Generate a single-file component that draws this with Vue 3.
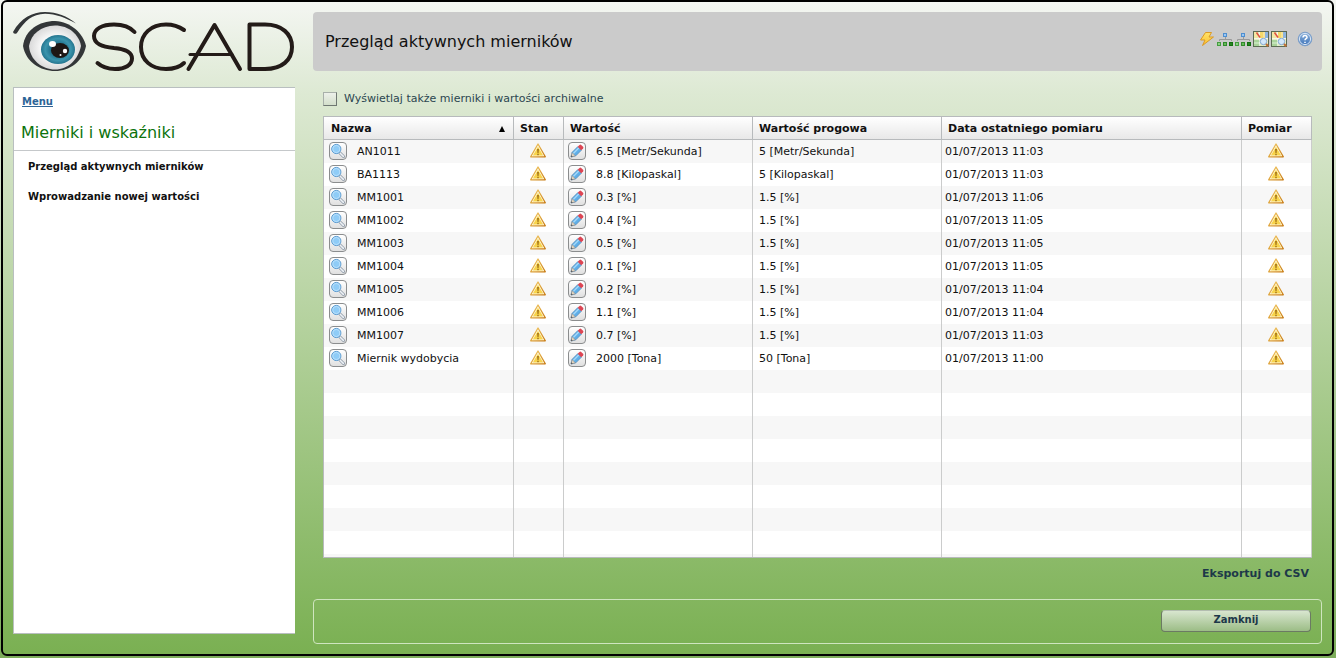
<script setup>
import { ref } from 'vue'

const archived = ref(false)
const rows = [
  ['AN1011', '6.5 [Metr/Sekunda]', '5 [Metr/Sekunda]', '01/07/2013 11:03'],
  ['BA1113', '8.8 [Kilopaskal]', '5 [Kilopaskal]', '01/07/2013 11:03'],
  ['MM1001', '0.3 [%]', '1.5 [%]', '01/07/2013 11:06'],
  ['MM1002', '0.4 [%]', '1.5 [%]', '01/07/2013 11:05'],
  ['MM1003', '0.5 [%]', '1.5 [%]', '01/07/2013 11:05'],
  ['MM1004', '0.1 [%]', '1.5 [%]', '01/07/2013 11:05'],
  ['MM1005', '0.2 [%]', '1.5 [%]', '01/07/2013 11:04'],
  ['MM1006', '1.1 [%]', '1.5 [%]', '01/07/2013 11:04'],
  ['MM1007', '0.7 [%]', '1.5 [%]', '01/07/2013 11:03'],
  ['Miernik wydobycia', '2000 [Tona]', '50 [Tona]', '01/07/2013 11:00'],
]
</script>

<template>
  <div class="frame">
    <svg class="defs" aria-hidden="true">
      <defs>
        <linearGradient id="warnFill" x1="0" y1="0" x2="1" y2="1">
          <stop offset="0" stop-color="#f6cf6a" />
          <stop offset="1" stop-color="#c87a10" />
        </linearGradient>
        <linearGradient id="boltFill" x1="0" y1="0" x2="0" y2="1">
          <stop offset="0" stop-color="#ffe36b" />
          <stop offset="1" stop-color="#f9c030" />
        </linearGradient>
        <linearGradient id="helpFill" x1="0" y1="0" x2="0" y2="1">
          <stop offset="0" stop-color="#8fb4dd" />
          <stop offset="1" stop-color="#3c72b8" />
        </linearGradient>
        <radialGradient id="irisFill">
          <stop offset="0.4" stop-color="#1f6f8a" />
          <stop offset="0.75" stop-color="#3b94ad" />
          <stop offset="1" stop-color="#25758f" />
        </radialGradient>
        <radialGradient id="whiteFill">
          <stop offset="0.5" stop-color="#fafafa" />
          <stop offset="1" stop-color="#d9d9d9" />
        </radialGradient>
        <symbol id="warn" viewBox="0 0 16 15">
          <path d="M8 1 15.3 13.8H.7Z" fill="#fffbe8" stroke="url(#warnFill)" stroke-width="1.3" stroke-linejoin="round" />
          <path d="M8 3.8 13.2 12.6H2.8Z" fill="#f8d44c" />
          <path d="M7 6h2l-.4 4H7.4Z" fill="#a8781c" />
          <rect x="7.2" y="10.7" width="1.6" height="1.5" fill="#a8781c" />
        </symbol>
        <symbol id="lens" viewBox="0 0 16 16">
          <path d="m10 10 3.500 3.500" stroke="#8b97a5" stroke-width="3" stroke-linecap="round" />
          <path d="m10.200 10.200 3.200 3.200" stroke="#eef2f6" stroke-width="1.600" stroke-linecap="round" />
          <circle cx="6.3" cy="6" r="4.6" fill="#8fccf7" stroke="#5b9bd0" />
          <circle cx="6.3" cy="6" r="3.600" fill="none" stroke="#c4e5fc" stroke-width=".8" />
        </symbol>
        <symbol id="pencil" viewBox="0 0 16 16">
          <path d="m2 14 1.2-4.800 5.500-5.500 3.600 3.600-5.500 5.500Z" fill="#5eaee8" stroke="#4b84b4" stroke-width=".7" />
          <path d="m4.3 10.500 5.700-5.700" stroke="#a5d8f8" stroke-width="1.4" />
          <path d="m2 14 1.2-4.300 3.1 3.1Z" fill="#e8d8c0" stroke="#8b8b8b" stroke-width=".6" />
          <path d="m8.700 3.700 1.800-1.800q.9-.7 1.700 0l1.900 1.900q.7.900 0 1.700l-1.800 1.800Z" fill="#dd4654" />
          <path d="m2 14 .5-1.7 1.2 1.2Z" fill="#444" />
        </symbol>
        <symbol id="tree" viewBox="0 0 18 16">
          <path d="M9.500 5v3M3.500 10V8.500h12V10" fill="none" stroke="#999" />
          <rect x="7.5" y="2.5" width="3" height="3" fill="#9bc7f2" stroke="#4f8fd0" />
          <rect x="1.5" y="11.5" width="3" height="3" fill="#8bd184" stroke="#459d40" />
          <rect x="7.5" y="11.5" width="3" height="3" fill="#64bb58" stroke="#338a2d" />
          <rect x="13.5" y="11.5" width="3" height="3" fill="#278422" stroke="#137010" />
        </symbol>
        <symbol id="map" viewBox="0 0 16 16">
          <rect x=".5" y=".5" width="15" height="15" fill="#e6edc6" stroke="#5c6b54" />
          <rect x="1" y="1" width="4" height="6" fill="#f3e7a4" />
          <rect x="7" y="1" width="5" height="6" fill="#f4d96a" />
          <rect x="12" y="1" width="3" height="6" fill="#8cb4df" />
          <rect x="1" y="9" width="6" height="6" fill="#a9d49a" />
          <path d="M1 7.500h14M6.500 1v14M11 1v7M1 12h6" stroke="#fff" stroke-width=".6" />
          <path d="m3.500 1.500 3.500 5" stroke="#df5140" stroke-width="1.5" />
          <circle cx="10.5" cy="10.5" r="3.200" fill="#d3e7fa" stroke="#83a9d4" />
          <path d="m13 13 2.300 2.300" stroke="#bd6d35" stroke-width="2" />
        </symbol>
      </defs>
    </svg>

    <aside class="side">
      <svg class="logo" viewBox="0 0 282 66" role="img" aria-label="OSCAD">
        <path d="M0 20C8 6 19 0 32 0c12 0 22 4 31 11.500C53 6 43 2 32 1.800 19 2 12 9 4.300 20.500A2.300 2.300 0 0 1 0 20Z" fill="#333638" />
        <path d="M10 34C12 18 26 9 42 9c16 1 28 12 31 25-3 15-16 25-31 25S13 50 10 34Z" fill="#333638" />
        <path d="M16 34c2-12 12-20 26-20.500 14 0 24 9 26 20.500-3 14-13 23.500-26 23.500S17 48 16 34Z" fill="url(#whiteFill)" />
        <ellipse cx="45" cy="37.500" rx="17" ry="14.500" fill="url(#irisFill)" />
        <ellipse cx="47" cy="38.500" rx="9" ry="7.500" fill="#1d1715" />
        <ellipse cx="39.500" cy="32" rx="3.500" ry="3" fill="#fff" />
        <circle cx="52" cy="39" r="2.200" fill="#fff" />
        <circle cx="47.500" cy="43" r="1" fill="#fff" />
        <g fill="none" stroke="#231b18" stroke-width="4" stroke-linecap="round" stroke-linejoin="round">
          <path d="M121.500 20C117 15 110 12.500 101 12.500 89 12.500 81 17 81 24c0 8 8 10.500 20 12 11 1 18 3.500 18 10.500 0 6.500-7 10.500-17 10.500-8 0-13-2-17.500-6" />
          <path d="M171 18c-5-3.500-10-5.500-18-5.500-15 0-25 9.500-25 22.500s10 22 25 22c8 0 14-2 18-6" />
          <path d="m175.500 57 26-44L227 57" />
          <path d="M177 42.500h42" stroke-width="3" />
          <path d="M236.500 12.500V57H252c17 0 27-9 27-22s-10-22.500-27-22.500Z" />
        </g>
      </svg>
      <nav class="menu">
        <a class="menu-link" href="#">Menu</a>
        <h2>Mierniki i wskaźniki</h2>
        <ul>
          <li><a href="#">Przegląd aktywnych mierników</a></li>
          <li><a href="#">Wprowadzanie nowej wartości</a></li>
        </ul>
      </nav>
    </aside>

    <main class="main">
      <header class="title">
        <h1>Przegląd aktywnych mierników</h1>
        <div class="tools">
          <button aria-label="Akcje"><svg viewBox="0 0 18 16"><path d="M7.500 1.500h6L11 6h4.500l-11 8.500L7 9H2.500Z" fill="url(#boltFill)" stroke="#dc9a25" stroke-linejoin="round" /></svg></button>
          <button aria-label="Struktura"><svg><use href="#tree" /></svg></button>
          <button aria-label="Hierarchia"><svg><use href="#tree" /></svg></button>
          <button aria-label="Mapa"><svg><use href="#map" /></svg></button>
          <button aria-label="Mapa szczegółowa"><svg><use href="#map" /></svg></button>
          <button class="help" aria-label="Pomoc">
            <svg viewBox="0 0 16 16">
              <circle cx="8" cy="8" r="6.800" fill="url(#helpFill)" stroke="#7c9fca" />
              <circle cx="8" cy="8" r="5.600" fill="none" stroke="#d5e3f3" />
              <path d="M6 6.500c0-3 4.200-2.500 4 0C9.900 7.700 8 7.800 8 9.300M8 10.700v1.300" fill="none" stroke="#fff" stroke-width="1.500" />
            </svg>
          </button>
        </div>
      </header>

      <section class="content">
        <label class="archive"><input v-model="archived" type="checkbox" />Wyświetlaj także mierniki i wartości archiwalne</label>
        <table>
          <colgroup>
            <col class="c-name" /><col class="c-state" /><col class="c-value" /><col class="c-value" /><col class="c-date" /><col class="c-measure" />
          </colgroup>
          <thead>
            <tr>
              <th><div class="sort"><span>Nazwa</span><svg width="6" height="6" viewBox="0 0 6 6"><path d="M3 0 6 6H0Z" /></svg></div></th>
              <th>Stan</th><th>Wartość</th><th>Wartość progowa</th><th>Data ostatniego pomiaru</th><th>Pomiar</th>
            </tr>
          </thead>
          <tbody>
            <tr v-for="r in rows" :key="r[0]">
              <td class="iconed"><div class="cell"><button :aria-label="'Podgląd ' + r[0]"><svg><use href="#lens" /></svg></button><span>{{ r[0] }}</span></div></td>
              <td class="state"><svg class="warn"><use href="#warn" /></svg></td>
              <td class="iconed value"><div class="cell"><button :aria-label="'Edytuj ' + r[0]"><svg><use href="#pencil" /></svg></button><span>{{ r[1] }}</span></div></td>
              <td class="limit">{{ r[2] }}</td>
              <td class="date">{{ r[3] }}</td>
              <td class="state"><svg class="warn"><use href="#warn" /></svg></td>
            </tr>
            <tr v-for="n in 8" :key="'empty' + n" :class="{ last: n === 8 }">
              <td v-for="c in 6" :key="c"></td>
            </tr>
          </tbody>
        </table>
        <a class="export" href="#">Eksportuj do CSV</a>
      </section>

      <footer class="actions"><button>Zamknij</button></footer>
    </main>
  </div>
</template>

<style>
html, body, #app { height: 100%; }
body { margin: 0; background: linear-gradient(#f4f6f2 0%, #7cac5a 100%); }
</style>

<style scoped>
* { box-sizing: border-box; }
.frame {
  display: grid;
  grid-template-columns: 282px minmax(0, 1fr);
  gap: 18px;
  min-height: calc(100% - 2px);
  margin: 0 2px 0 1px;
  padding: 10px;
  border: 2px solid #000;
  border-radius: 6px;
  background: linear-gradient(#f4f6f2 0%, #dde9d3 14%, #7ab052 100%);
  font: 11px/14px "DejaVu Sans", Verdana, sans-serif;
  color: #111;
}
.defs { position: absolute; width: 0; height: 0; }
button { padding: 0; border: 0; background: none; font: inherit; cursor: pointer; }
a { color: inherit; text-decoration: none; }
.side { display: flex; flex-direction: column; padding-bottom: 10px; }
.logo { display: block; width: 282px; height: 66px; margin-bottom: 9px; flex: none; }
.menu { flex: 1; background: #fff; border: 1px solid #b9bfc0; border-right: 0; }
.menu-link { display: block; margin: 7px 8px 0; font-size: 10px; font-weight: bold; color: #2d6496; text-decoration: underline; }
h2 { margin: 0; padding: 14px 7px 7px; border-bottom: 1px solid #c5c8ca; font-size: 16px; line-height: 20px; font-weight: normal; color: #0c730c; }
ul { margin: 0; padding: 9px 14px; list-style: none; font-size: 10px; font-weight: bold; }
li { height: 30px; }
.main { display: flex; flex-direction: column; min-width: 0; }
.title { display: flex; align-items: center; justify-content: space-between; height: 59px; padding: 0 8px 0 12px; border-radius: 4px; background: #cbcbcb; }
h1 { margin: 0; font-size: 16px; line-height: 20px; font-weight: normal; }
.tools { display: flex; align-items: center; margin-bottom: 5px; }
.tools button, .tools svg { display: block; width: 18px; height: 16px; }
.tools .help { margin-left: 8px; }
.content { display: flex; flex-direction: column; padding: 21px 10px 0; }
.archive { display: flex; align-items: center; gap: 7px; color: #2b4650; margin-bottom: 10px; }
.archive input { appearance: none; width: 14px; height: 14px; margin: 0; border: 1px solid #6f7772; border-top-color: #a8b0aa; border-left-color: #a8b0aa; background: linear-gradient(#edf1ea, #d3dfcb); }
.archive input:checked { background: #4f8a2b; }
table { width: 100%; table-layout: fixed; border-collapse: separate; border-spacing: 0; border: 1px solid #b7babc; border-right: 0; background: #fff; }
.c-name { width: 190px; }
.c-state { width: 50px; }
.c-value { width: 189px; }
.c-date { width: 300px; }
th { height: 23px; padding: 2px 6px 0; border-right: 1px solid #b7babc; border-bottom: 1px solid #b7babc; background: linear-gradient(#fff, #e8e8e8); text-align: left; }
th:first-child { padding: 2px 8px 0 7px; }
.sort { display: flex; align-items: center; justify-content: space-between; }
td { height: 23px; padding: 0 5px; border-right: 1px solid #cbcccc; }
tr:nth-child(odd) td { background: #f7f7f7; }
.last td { height: 26px; background: linear-gradient(#fff 23px, #f7f7f7 23px); }
.iconed { padding-bottom: 1px; }
.value { padding-left: 4px; }
.cell { display: flex; align-items: center; gap: 10px; }
.cell span { padding-top: 2px; }
.cell button { width: 18px; height: 18px; border: 1px solid #8b8d8e; border-radius: 4px; background: linear-gradient(#fff, #e0e0e0); }
.cell svg { display: block; width: 16px; height: 16px; }
.state { padding: 0 6px 2px 5px; }
.warn { display: block; width: 16px; height: 15px; margin: 0 auto; }
.limit { padding-left: 6px; }
.date { padding-left: 3px; }
.export { align-self: flex-end; margin: 9px 3px 0; font-weight: bold; color: #1d3849; }
.actions { display: flex; justify-content: flex-end; align-items: center; height: 45px; margin-top: 18px; padding: 0 10px 2px; border: 1px solid #cfe5bf; border-radius: 4px; }
.actions button { width: 150px; height: 22px; padding-bottom: 1px; border: 1px solid #6b7a63; border-top-color: #b3bdb0; border-radius: 4px; background: linear-gradient(#d8e6cf, #9cbd86); color: #1d3849; font-size: 10px; font-weight: bold; }
</style>
